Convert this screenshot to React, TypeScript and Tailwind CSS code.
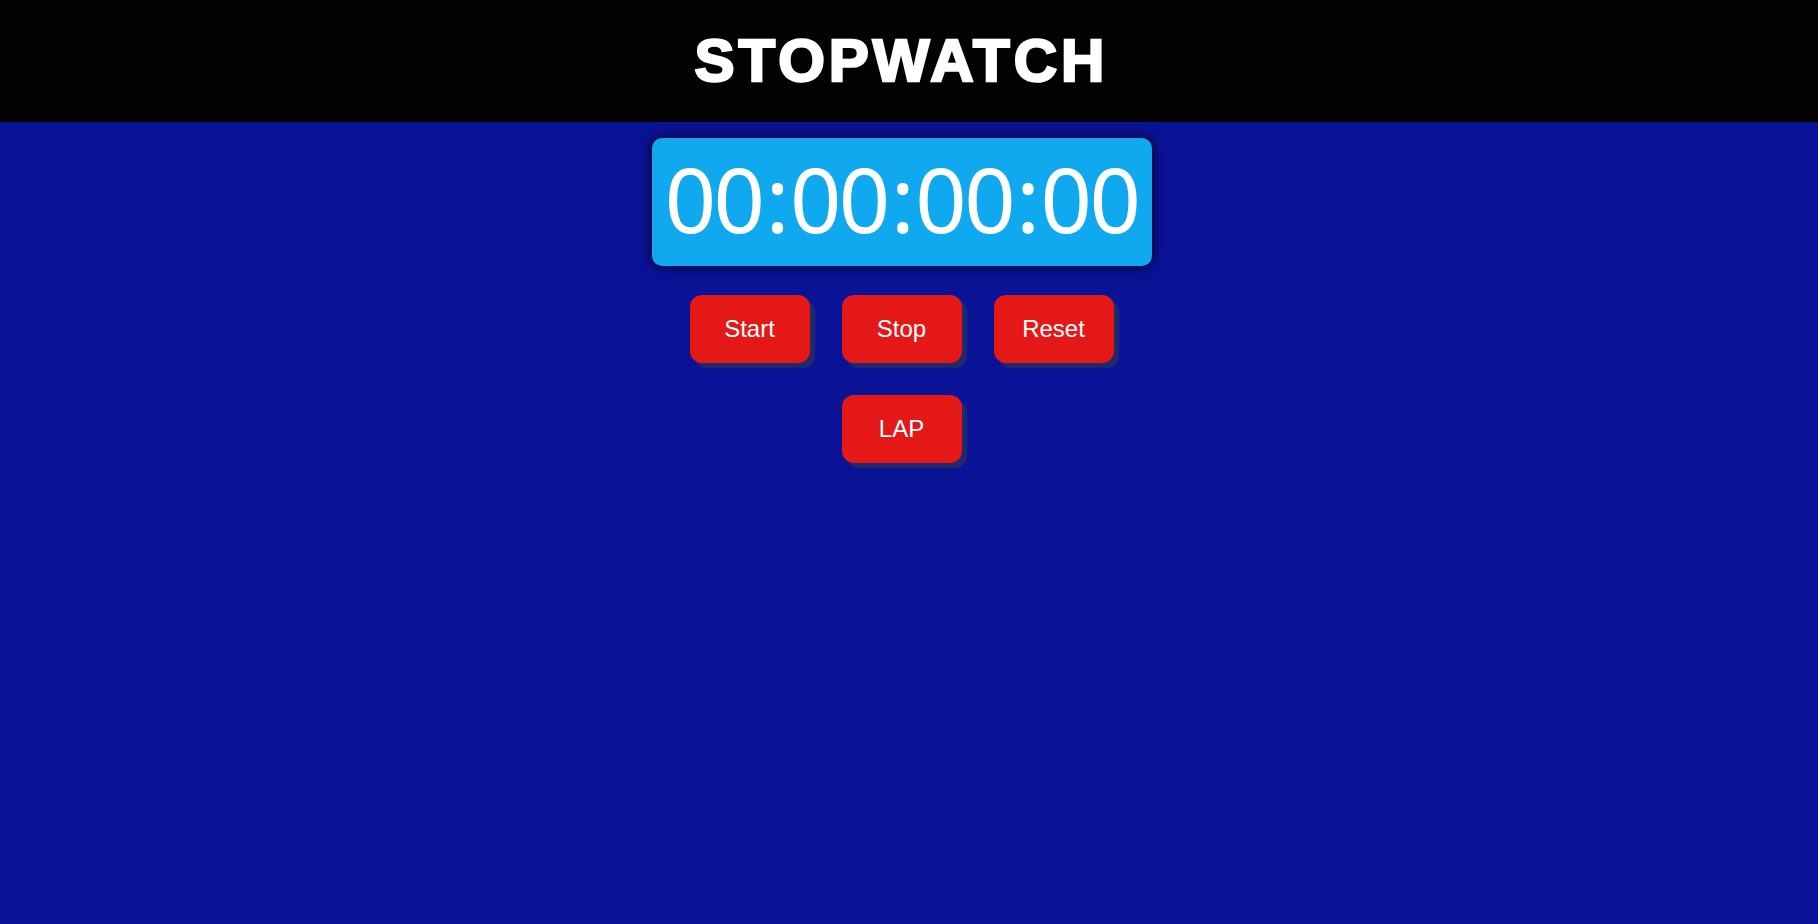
const Btn = ({ label }: { label: string }) => (
  <button className="w-[120px] h-[68px] rounded-[12px] bg-[#e51818] text-white text-[24px] shadow-[5px_5px_2px_#232a6c] [font-family:'Liberation_Sans',Arial,sans-serif]">
    {label}
  </button>
);

const App = () => {
  return (
    <div className="min-h-screen bg-[#0a1296] flex flex-col">
      <header className="h-[122px] bg-[#020202] flex items-center justify-center pr-[15px]">
        <h1 className="text-white text-[60px] font-bold tracking-[4px] leading-none [-webkit-text-stroke:2.5px_white] [font-family:'Liberation_Sans',Arial,sans-serif]">
          STOPWATCH
        </h1>
      </header>
      <main className="flex flex-col items-center pr-[15px]">
        <div className="mt-4 w-[500px] h-[128px] pb-2 rounded-[10px] bg-[#10a8ee] shadow-[0_0_12px_rgba(0,0,0,0.9)] flex items-center justify-center">
          <span className="text-white text-[90px] leading-none tracking-[-2.6px] [font-family:'Noto_Sans',sans-serif]">
            00<span className="mx-[3px]">:</span>00<span className="mx-[3px]">:</span>00<span className="mx-[3px]">:</span>00
          </span>
        </div>
        <div className="mt-[29px] flex gap-8">
          <Btn label="Start" />
          <Btn label="Stop" />
          <Btn label="Reset" />
        </div>
        <div className="mt-8">
          <Btn label="LAP" />
        </div>
      </main>
    </div>
  );
};

export default App;
